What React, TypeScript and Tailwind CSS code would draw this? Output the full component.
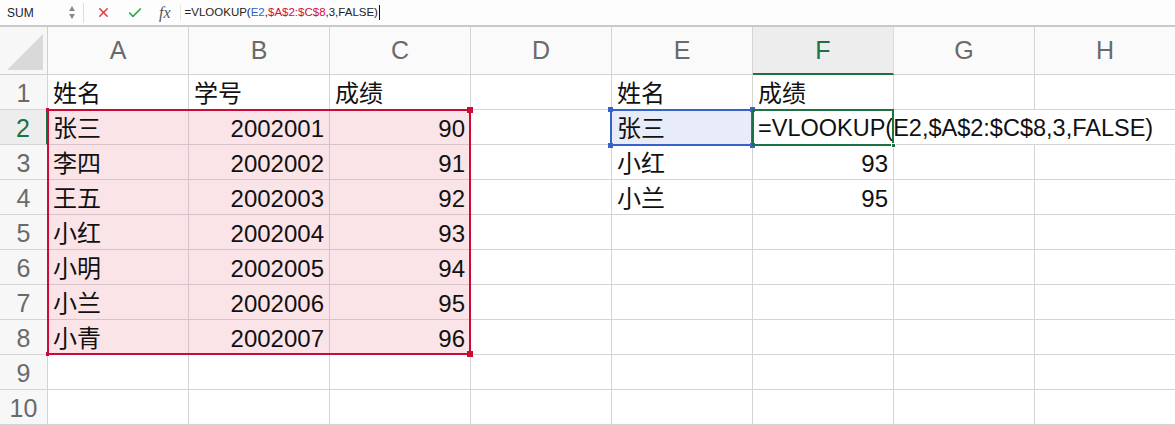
import { X, Check } from "lucide-react";

const cols = ["A", "B", "C", "D", "E", "F", "G", "H"];

type Cell = { v: string; num?: boolean };

const data: Record<number, Record<string, Cell>> = {
  1: { A: { v: "姓名" }, B: { v: "学号" }, C: { v: "成绩" }, E: { v: "姓名" }, F: { v: "成绩" } },
  2: { A: { v: "张三" }, B: { v: "2002001", num: true }, C: { v: "90", num: true }, E: { v: "张三" } },
  3: { A: { v: "李四" }, B: { v: "2002002", num: true }, C: { v: "91", num: true }, E: { v: "小红" }, F: { v: "93", num: true } },
  4: { A: { v: "王五" }, B: { v: "2002003", num: true }, C: { v: "92", num: true }, E: { v: "小兰" }, F: { v: "95", num: true } },
  5: { A: { v: "小红" }, B: { v: "2002004", num: true }, C: { v: "93", num: true } },
  6: { A: { v: "小明" }, B: { v: "2002005", num: true }, C: { v: "94", num: true } },
  7: { A: { v: "小兰" }, B: { v: "2002006", num: true }, C: { v: "95", num: true } },
  8: { A: { v: "小青" }, B: { v: "2002007", num: true }, C: { v: "96", num: true } },
};

const font = { fontFamily: '"Liberation Sans", "Noto Sans CJK SC", sans-serif' };

const inRange = (r: number, c: string) => r >= 2 && r <= 8 && ["A", "B", "C"].includes(c);

function FormulaBar() {
  return (
    <div className="flex h-[25px] items-center bg-[#fdfdfd] text-[12px] text-[#222]">
      <div className="flex w-[83px] items-center justify-between pl-[7px] pr-[8px]">
        <span>SUM</span>
        <div className="flex flex-col items-center gap-[3px]">
          <span className="block h-0 w-0 border-x-[3px] border-b-[5px] border-x-transparent border-b-[#8a8a8a]" />
          <span className="block h-0 w-0 border-x-[3px] border-t-[5px] border-x-transparent border-t-[#8a8a8a]" />
        </div>
      </div>
      <div className="h-[20px] w-px bg-[#dcdcdc]" />
      <div className="flex items-center gap-[16px] pl-[12px]">
        <X size={15} strokeWidth={2.4} className="text-[#e23b3b]" />
        <Check size={16} strokeWidth={2.6} className="text-[#34a853]" />
        <span className="text-[16px] italic text-[#555]" style={{ fontFamily: '"Liberation Serif", serif' }}>
          fx
        </span>
      </div>
      <div className="ml-[9px] h-[16px] w-px bg-[#e6e6e6]" />
      <div className="ml-[4px] flex items-center text-[11.5px]">
        <span>=VLOOKUP(</span>
        <span className="text-[#2f62c8]">E2</span>
        <span>,</span>
        <span className="text-[#d0103a]">$A$2:$C$8</span>
        <span>,3,FALSE)</span>
        <span className="ml-[1px] h-[15px] w-px bg-[#111]" />
      </div>
    </div>
  );
}

export default function App() {
  const rows = Array.from({ length: 10 }, (_, i) => i + 1);
  return (
    <div className="h-[425px] w-[1175px] overflow-hidden bg-white" style={font}>
      <FormulaBar />
      <div className="h-[2px] border-y border-[#c9c9c9] bg-[#efefef]" />
      <div className="relative grid grid-cols-[48px_repeat(8,141px)]">
        {/* corner */}
        <div className="relative h-[48px] border-b border-r border-[#cfcfcf] bg-[#f7f7f7]">
          <div className="absolute bottom-[4px] right-[4px] h-0 w-0 border-b-[36px] border-l-[36px] border-b-[#d9d9d9] border-l-transparent" />
        </div>
        {cols.map((c) => (
          <div
            key={c}
            className={
              c === "F"
                ? "flex h-[48px] items-center justify-center border-b-2 border-r border-b-[#1e7145] border-r-[#dcdcdc] bg-[#ededed] pt-[2px] text-[25px] text-[#1e7145]"
                : "flex h-[48px] items-center justify-center border-b border-r border-[#d4d4d4] bg-[#fafafa] text-[25px] text-[#6a6a6a]"
            }
          >
            {c}
          </div>
        ))}
        {rows.map((r) => (
          <div key={r} className="contents">
            <div
              className={
                r === 2
                  ? "flex h-[35px] items-center justify-center border-b border-r-2 border-b-[#d4d4d4] border-r-[#1e7145] bg-[#ededed] pt-[3px] text-[25px] text-[#1e7145]"
                  : "flex h-[35px] items-center justify-center border-b border-r border-[#d4d4d4] bg-[#f7f7f7] pt-[3px] text-[25px] text-[#6a6a6a]"
              }
            >
              {r}
            </div>
            {cols.map((c) => {
              if (r === 2 && (c === "G" || c === "H")) return null;
              if (r === 2 && c === "F") {
                return (
                  <div
                    key={c}
                    className="col-span-3 flex h-[35px] items-center overflow-visible whitespace-nowrap border-b border-r border-[#d4d4d4] pl-[5px] pt-[4px] text-[23.5px] text-[#111]"
                  >
                    =VLOOKUP(E2,$A$2:$C$8,3,FALSE)
                  </div>
                );
              }
              const cell = data[r]?.[c];
              const pink = inRange(r, c);
              const blue = r === 2 && c === "E";
              return (
                <div
                  key={c}
                  className={
                    "flex h-[35px] items-center border-b border-r px-[5px] pt-[4px] text-[24px] text-[#111] " +
                    (pink
                      ? "border-[#d8c3c8] bg-[#fae4e8] "
                      : blue
                      ? "border-[#d4d4d4] bg-[#e8ecf8] "
                      : "border-[#d4d4d4] bg-white ") +
                    (cell?.num ? "justify-end" : "justify-start")
                  }
                >
                  {cell?.v}
                </div>
              );
            })}
          </div>
        ))}

        {/* A2:C8 range border */}
        <div className="pointer-events-none absolute left-[47px] top-[82px] h-[246px] w-[424px] border-2 border-[#cc0a36]" />
        <div className="absolute left-[467px] top-[80px] h-[6px] w-[6px] bg-[#cc0a36]" />
        <div className="absolute left-[467px] top-[324px] h-[6px] w-[6px] bg-[#cc0a36]" />
        <div className="absolute left-[46px] top-[81px] h-[4px] w-[3px] bg-[#cc0a36]" />
        <div className="absolute left-[46px] top-[325px] h-[4px] w-[3px] bg-[#cc0a36]" />

        {/* E2 reference border */}
        <div className="pointer-events-none absolute left-[610px] top-[82px] h-[37px] w-[143px] border-2 border-[#3563c9]" />
        <div className="absolute left-[608px] top-[80px] h-[5px] w-[5px] bg-[#3563c9]" />
        <div className="absolute left-[750px] top-[80px] h-[5px] w-[5px] bg-[#3563c9]" />
        <div className="absolute left-[608px] top-[116px] h-[5px] w-[5px] bg-[#3563c9]" />
        <div className="absolute left-[750px] top-[116px] h-[5px] w-[5px] bg-[#3563c9]" />

        {/* F2 active cell */}
        <div className="pointer-events-none absolute left-[752px] top-[82px] h-[37px] w-[142px] border-2 border-[#1e7145]" />
        <div className="absolute left-[891px] top-[116px] h-[5px] w-[5px] border border-white bg-[#1e7145]" />
      </div>
    </div>
  );
}
